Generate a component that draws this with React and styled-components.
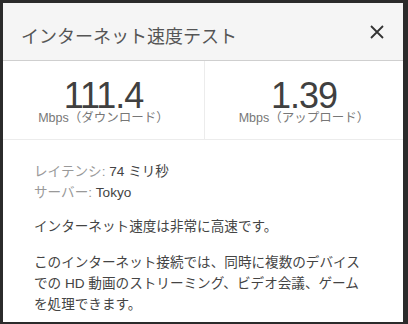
import React from "react"
import styled, {createGlobalStyle} from "styled-components"

const GlobalStyle = createGlobalStyle`
    html, body {
        margin: 0;
        padding: 0;
        background: #2b2b2b;
    }
    body {
        font-family: "Liberation Sans", "Noto Sans CJK JP", sans-serif;
    }
`

const Frame = styled.div`
    width: 408px;
    height: 324px;
    box-sizing: border-box;
    padding: 3px 5px 2px 3px;
`

const Dialog = styled.div`
    width: 400px;
    height: 319px;
    background: #fff;
    display: flex;
    flex-direction: column;
    overflow: hidden;
`

const Header = styled.div`
    height: 58px;
    flex: none;
    display: flex;
    align-items: center;
    justify-content: space-between;
    padding: 6px 18px 0 18px;
    box-sizing: border-box;
    background: #f5f5f5;
    border-bottom: 1px solid #cfcfcf;
`

const Title = styled.h1`
    margin: 0;
    font-size: 18px;
    font-weight: 400;
    color: #555;
`

const CloseButton = styled.button`
    border: 0;
    background: none;
    padding: 0;
    width: 16px;
    height: 16px;
    margin-top: -6px;
    display: flex;
    align-items: center;
    justify-content: center;
    cursor: pointer;
`

const Stats = styled.div`
    display: grid;
    grid-template-columns: 201px 1fr;
    height: 78px;
    flex: none;
    border-bottom: 1px solid #ececec;
`

const Stat = styled.div`
    display: flex;
    flex-direction: column;
    align-items: center;
    padding-top: 20px;
    border-left: ${p => (p.divided ? "1px solid #ececec" : "none")};
`

const Value = styled.div`
    font-size: 36px;
    line-height: 30px;
    letter-spacing: -1px;
    color: #404040;
`

const Unit = styled.div`
    font-size: 12.5px;
    line-height: 14px;
    color: #777;
`

const Body = styled.div`
    padding: 21px 37px 0 31px;
    font-size: 13.6px;
    line-height: 21px;
    color: #444;
`

const Info = styled.div``

const Label = styled.span`
    color: #999;
`

const Para = styled.p`
    margin: ${p => p.gap}px 0 0;
`

function CloseIcon() {
    return (
        <svg width="14" height="14" viewBox="0 0 14 14">
            <path d="M1 1 L13 13 M13 1 L1 13" stroke="#333" strokeWidth="1.8" fill="none" />
        </svg>
    )
}

export default function App() {
    return (
        <Frame>
            <GlobalStyle />
            <Dialog>
                <Header>
                    <Title>インターネット速度テスト</Title>
                    <CloseButton aria-label="閉じる">
                        <CloseIcon />
                    </CloseButton>
                </Header>
                <Stats>
                    <Stat>
                        <Value>111.4</Value>
                        <Unit>Mbps（ダウンロード）</Unit>
                    </Stat>
                    <Stat divided>
                        <Value>1.39</Value>
                        <Unit>Mbps（アップロード）</Unit>
                    </Stat>
                </Stats>
                <Body>
                    <Info>
                        <div><Label>レイテンシ:</Label> 74 ミリ秒</div>
                        <div><Label>サーバー:</Label> Tokyo</div>
                    </Info>
                    <Para gap={13}>インターネット速度は非常に高速です。</Para>
                    <Para gap={15}>
                        このインターネット接続では、同時に複数のデバイスでの HD 動画のストリーミング、ビデオ会議、ゲームを処理できます。
                    </Para>
                </Body>
            </Dialog>
        </Frame>
    )
}
